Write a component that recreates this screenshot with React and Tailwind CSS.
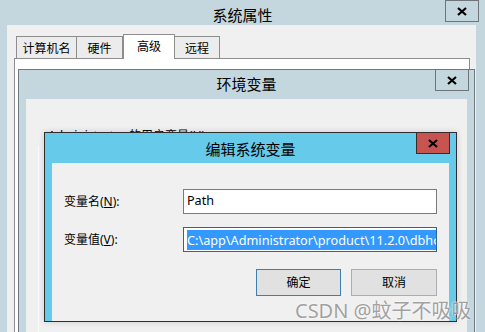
import React from "react";

const font = "font-['Noto_Sans','Noto_Sans_CJK_SC',sans-serif]";

function CloseX({ red }) {
  return (
    <div
      className={`flex h-[22px] w-[34px] items-center justify-center border ${
        red ? "border-[#3a2a2a] bg-[#c75450]" : "border-[#6e7478]"
      }`}
    >
      <svg width="10" height="9" viewBox="0 0 10 9">
        <path d="M1 1 L9 8 M9 1 L1 8" stroke="#000" strokeWidth="2.2" />
      </svg>
    </div>
  );
}

function Tab({ label, active, w }) {
  return (
    <div
      className={`flex items-start justify-center border border-b-0 border-[#8e8e8e] text-[12px] ${
        active
          ? "relative z-10 -mb-px h-[25px] bg-white pt-[3px]"
          : "h-[22px] bg-[#ececec] pt-[3px] -ml-px first:ml-0"
      }`}
      style={{ width: w }}
    >
      {label}
    </div>
  );
}

export default function App() {
  return (
    <div
      className={`relative flex h-[332px] w-[485px] flex-col overflow-hidden bg-[#c4d7de] text-black ${font}`}
    >
      {/* 系统属性 窗口 */}
      <div className="grid h-[31px] grid-cols-[40px_1fr_40px] items-start">
        <div />
        <div className="pt-[5px] text-center text-[15px] leading-[20px]">系统属性</div>
        <CloseX />
      </div>
      <div className="ml-[7px] w-[469px] flex-1 bg-[#f0f0f0] pt-[9px]">
        <div className="flex items-end pl-[9px]">
          <Tab label="计算机名" w={61} />
          <Tab label="硬件" w={47} />
          <Tab label="高级" w={52} active />
          <Tab label="远程" w={46} />
        </div>
        <div className="ml-[7px] h-[300px] w-[456px] border border-[#8e8e8e] bg-white" />
      </div>

      {/* 环境变量 窗口 */}
      <div className="absolute left-[18px] top-[69px] flex h-[280px] w-[457px] flex-col border border-[#6f787d] bg-[#c4d7de]">
        <div className="grid h-[29px] grid-cols-[40px_1fr_40px] items-start">
          <div />
          <div className="pt-[4px] text-center text-[15px] leading-[20px]">环境变量</div>
          <div className="-mt-px ml-px">
            <CloseX />
          </div>
        </div>
        <div className="mx-[7px] flex-1 bg-[#f0f0f0] pl-[22px] pt-[29px]">
          <div className="text-[12px] leading-[16px]">
            Administrator 的用户变量(<span className="underline">U</span>)
          </div>
          <div className="-ml-[10px] mt-[2px] h-[200px] border-l border-[#fbfbfb]" />
        </div>
      </div>

      {/* 编辑系统变量 对话框 */}
      <div className="absolute left-[44px] top-[132px] flex h-[190px] w-[413px] flex-col border border-[#2e2e2e] bg-[#66caea] shadow-[0_0_6px_rgba(0,0,0,0.15)]">
        <div className="grid h-[30px] grid-cols-[40px_1fr_40px] items-start">
          <div />
          <div className="pt-[6px] text-center text-[15px] leading-[20px]">编辑系统变量</div>
          <div className="-mt-px">
            <CloseX red />
          </div>
        </div>
        <div className="mx-[7px] flex-1 bg-[#f0f0f0] pl-[12px] pt-[26px]">
          <div className="grid grid-cols-[119px_254px] items-center gap-y-[13px] text-[12px]">
            <div>
              变量名(<span className="underline">N</span>):
            </div>
            <div className="flex h-[25px] items-center border border-[#7a7a7a] bg-white pl-[3px] text-[12.6px]">
              Path
            </div>
            <div>
              变量值(<span className="underline">V</span>):
            </div>
            <div className="flex h-[25px] items-center overflow-hidden whitespace-nowrap border border-[#2f6691] bg-white pl-[3px]">
              <div className="h-[20px] w-px bg-[#5a3a20]" />
              <span className="bg-[#3399ff] pr-2 text-[12.7px] leading-[20px] text-white">
                C:\app\Administrator\product\11.2.0\dbhome_1\bin
              </span>
            </div>
          </div>
          <div className="mt-[17px] flex w-[373px] justify-end gap-[10px] text-[12px]">
            <button className="h-[27px] w-[85px] border border-[#3c7fb1] bg-[#e1e1e1]">确定</button>
            <button className="h-[27px] w-[86px] border border-[#adadad] bg-[#e1e1e1]">取消</button>
          </div>
        </div>
      </div>

      {/* 水印 */}
      <div className="absolute left-[295px] top-[298px] text-[20px] leading-[26px] text-[#999999] opacity-90 [text-shadow:0_0_2px_#fff,0_0_2px_#fff]">
        CSDN @蚊子不吸吸
      </div>
    </div>
  );
}
